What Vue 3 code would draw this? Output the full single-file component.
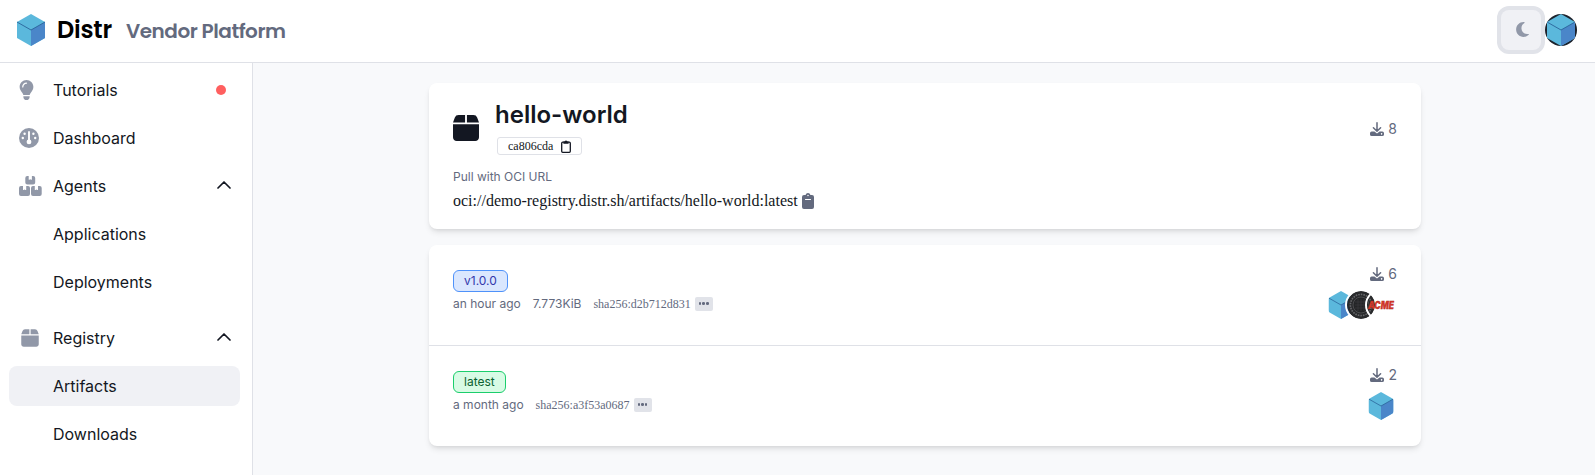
<script setup>
const nav = [
  { label: 'Tutorials', icon: 'bulb', dot: true },
  { label: 'Dashboard', icon: 'gauge' },
  { label: 'Agents', icon: 'boxes', open: true },
  { label: 'Applications' },
  { label: 'Deployments' },
  { label: 'Registry', icon: 'box', open: true, spaced: true },
  { label: 'Artifacts', active: true },
  { label: 'Downloads' }
]
const versions = [
  { tag: 'v1.0.0', tone: 'blue', age: 'an hour ago', size: '7.773KiB', sha: 'sha256:d2b712d831', pulls: 6, users: ['cube', 'tire', 'acme'] },
  { tag: 'latest', tone: 'green', age: 'a month ago', sha: 'sha256:a3f53a0687', pulls: 2, users: ['cube'] }
]
</script>

<template>
  <svg class="defs" width="0" height="0">
    <symbol id="cube" viewBox="0 0 28 32">
      <path d="M14 0 28 8V24L14 32 0 24V8Z" fill="#5bb8dc" />
      <path d="M14 16 28 8V24L14 32Z" fill="#4a86c9" />
      <path d="M0 8 14 16 28 8" fill="none" stroke="#2a6399" stroke-width=".9" />
    </symbol>
    <symbol id="box" viewBox="0 0 448 512">
      <path fill="currentColor" d="M96 32H208V160H0L32 74Q48 32 96 32zM240 32H352Q400 32 416 74L448 160H240zM0 192H448V416c0 35.3-28.7 64-64 64H64c-35.3 0-64-28.7-64-64z" />
    </symbol>
    <symbol id="download" viewBox="0 0 14 14">
      <path d="M7 .8V9M3.4 5.8 7 9.3 10.6 5.8" fill="none" stroke="currentColor" stroke-width="1.5" stroke-linecap="round" stroke-linejoin="round" />
      <path fill="currentColor" fill-rule="evenodd" d="M1.7 9.6H4.4L7 11.6 9.6 9.6H12.3Q14 9.6 14 11.2V12.4Q14 14 12.3 14H1.7Q0 14 0 12.4V11.2Q0 9.6 1.7 9.6ZM11.6 11.1a.7.7 0 1 0 .01 0Z" />
    </symbol>
  </svg>

  <header class="top">
    <svg class="logo"><use href="#cube" /></svg>
    <span class="brand">Distr</span>
    <span class="platform">Vendor Platform</span>
    <button class="theme">
      <svg width="13" height="17" viewBox="0 0 384 512"><path fill="currentColor" d="M223.5 32C100 32 0 132.3 0 256S100 480 223.5 480c60.6 0 115.5-24.2 155.8-63.4c5-4.9 6.3-12.5 3.1-18.7s-10.1-9.7-17-8.5c-9.8 1.7-19.8 2.6-30.1 2.6c-96.9 0-175.5-78.8-175.5-176c0-65.8 36-123.1 89.3-153.3c6.1-3.5 9.2-10.5 7.7-17.3s-7.3-11.9-14.3-12.5c-6.3-.5-12.6-.8-19-.8z" /></svg>
    </button>
    <span class="profile"><svg width="28" height="32"><use href="#cube" /></svg></span>
  </header>

  <div class="body">
    <nav class="side">
      <a v-for="n in nav" :key="n.label" class="item" :class="{ active: n.active, spaced: n.spaced }">
        <span class="ico">
          <svg v-if="n.icon === 'bulb'" width="15" height="20" viewBox="0 0 384 512"><path fill="currentColor" d="M272 384c9.6-31.9 29.5-59.1 49.2-86.2c5.2-7.1 10.4-14.2 15.4-21.4c19.8-28.5 31.4-63 31.4-100.3C368 78.8 289.2 0 192 0S16 78.8 16 176c0 37.3 11.6 71.9 31.4 100.3c5 7.2 10.2 14.3 15.4 21.4c19.8 27.1 39.7 54.4 49.2 86.2H272zM192 512c44.2 0 80-35.8 80-80V416H112v16c0 44.2 35.8 80 80 80zM112 176c0 8.8-7.2 16-16 16s-16-7.2-16-16c0-61.9 50.1-112 112-112c8.8 0 16 7.2 16 16s-7.2 16-16 16c-44.2 0-80 35.8-80 80z" /></svg>
          <svg v-else-if="n.icon === 'gauge'" width="20" height="20" viewBox="0 0 20 20">
            <circle cx="10" cy="10" r="10" fill="currentColor" />
            <path d="M10 3.9V13" stroke="#fff" stroke-width="1.9" stroke-linecap="round" />
            <g fill="#fff"><circle cx="10" cy="13.9" r="2.4" /><circle cx="5.6" cy="5.8" r="1.2" /><circle cx="14.4" cy="5.8" r="1.2" /><circle cx="3.8" cy="10" r="1.2" /><circle cx="16.2" cy="10" r="1.2" /></g>
          </svg>
          <svg v-else-if="n.icon === 'boxes'" width="23" height="20" viewBox="0 0 23 20">
            <g fill="currentColor">
              <path d="M8.3 0H9.7V3.2Q9.7 4 10.4 3.7L11.3 3.3 12.2 3.7Q12.9 4 12.9 3.2V0H14.1Q16.2 0 16.2 2V6.6Q16.2 8.6 14.1 8.6H8.3Q6.3 8.6 6.3 6.6V2Q6.3 0 8.3 0Z" />
              <path d="M2 10H4V13.5Q4 14.3 4.7 14L5.6 13.5 6.5 14Q7.2 14.3 7.2 13.5V10H9Q11 10 11 12V18Q11 20 9 20H2Q0 20 0 18V12Q0 10 2 10Z" />
              <path d="M14 10H15.8V13.5Q15.8 14.3 16.5 14L17.4 13.5 18.3 14Q19 14.3 19 13.5V10H20.7Q22.7 10 22.7 12V18Q22.7 20 20.7 20H14Q12 20 12 18V12Q12 10 14 10Z" />
            </g>
          </svg>
          <svg v-else-if="n.icon === 'box'" class="pkg" width="18" height="20"><use href="#box" /></svg>
        </span>
        <span class="label">{{ n.label }}</span>
        <span v-if="n.dot" class="dot"></span>
        <svg v-if="n.open" class="chev" width="14" height="8" viewBox="0 0 14 8"><path d="M1 7 7 1 13 7" fill="none" stroke="currentColor" stroke-width="1.7" stroke-linecap="round" stroke-linejoin="round" /></svg>
      </a>
    </nav>

    <main class="main">
      <section class="card summary">
        <div class="head">
          <svg class="bigbox" width="26" height="30"><use href="#box" /></svg>
          <div class="titles">
            <h1>hello-world</h1>
            <span class="hash">ca806cda
              <svg width="10" height="13" viewBox="0 0 10 13"><rect x=".7" y="2.2" width="8.6" height="10.1" rx="1" fill="none" stroke="currentColor" stroke-width="1.3" /><path d="M2.4 1.4H3.6Q5-.6 6.4 1.4H7.6V3.8H2.4Z" fill="currentColor" /></svg>
            </span>
          </div>
          <span class="pulls"><svg width="14" height="14"><use href="#download" /></svg>8</span>
        </div>
        <div class="hint">Pull with OCI URL</div>
        <div class="url">oci://demo-registry.distr.sh/artifacts/hello-world:latest
          <svg width="12" height="16" viewBox="0 0 12 16"><path fill="#636a7e" fill-rule="evenodd" d="M6 0C7.2 0 8.1.8 8.4 2H10Q12 2 12 4V14Q12 16 10 16H2Q0 16 0 14V4Q0 2 2 2H3.6C3.9.8 4.8 0 6 0ZM6 1.7A.75.75 0 1 0 6 3.2.75.75 0 1 0 6 1.7ZM3.4 6Q3 6 3 6.5T3.4 7H8.6Q9 7 9 6.5T8.6 6Z" /></svg>
        </div>
      </section>

      <section class="card">
        <article v-for="v in versions" :key="v.tag" class="version">
          <div>
            <span class="tag" :class="v.tone">{{ v.tag }}</span>
            <div class="meta">
              <span>{{ v.age }}</span>
              <span v-if="v.size">{{ v.size }}</span>
              <span class="sha">{{ v.sha }}<button class="more"><i></i><i></i><i></i></button></span>
            </div>
          </div>
          <div class="right">
            <span class="pulls"><svg width="14" height="14"><use href="#download" /></svg>{{ v.pulls }}</span>
            <div class="users">
              <span v-for="u in v.users" :key="u" class="user">
                <svg v-if="u === 'cube'" width="28" height="28"><use href="#cube" /></svg>
                <svg v-else-if="u === 'tire'" width="28" height="28" viewBox="0 0 28 28">
                  <circle cx="14" cy="14" r="14" fill="#292a2c" />
                  <circle cx="14" cy="14" r="10.6" fill="none" stroke="#66676a" stroke-width="1.6" stroke-dasharray="1.6 1" />
                  <circle cx="14" cy="14" r="8" fill="#242527" stroke="#4b4c4e" />
                  <path d="M8 11H20M8 14H20M8 17H20M11 8V20M14 8V20M17 8V20" stroke="#3d3e40" stroke-width=".6" />
                </svg>
                <svg v-else width="28" height="28" viewBox="0 0 28 28"><text x="1" y="17.8" textLength="26" lengthAdjust="spacingAndGlyphs" class="acme">ACME</text></svg>
              </span>
            </div>
          </div>
        </article>
      </section>
    </main>
  </div>
</template>

<style>
html, body { margin: 0; background: #f8f9fb; overflow: hidden; }
</style>

<style scoped>
* { box-sizing: border-box; }
svg { display: block; flex: none; }
.defs { position: absolute; }
.top, .body { font-family: Inter, "Liberation Sans", sans-serif; color: #131722; }
.top { height: 63px; display: flex; align-items: center; padding: 0 18px 3px 17px; background: #fff; border-bottom: 1px solid #dfe1e7; }
.logo { width: 28px; height: 32px; }
.brand, .platform { font-family: Poppins, Inter, sans-serif; font-weight: 600; font-feature-settings: "cv11"; white-space: nowrap; }
.brand { margin-left: 12px; width: 69px; font-size: 24px; color: #000; letter-spacing: -.2px; }
.platform { font-size: 20px; color: #636a7e; padding-top: 2px; letter-spacing: -.48px; }
.theme { width: 40px; height: 40px; margin: 0 4px 0 auto; padding: 0 0 0 2px; border: 0; border-radius: 8px; display: flex; align-items: center; justify-content: center; background: #f0f1f5; color: #9198a8; box-shadow: 0 0 0 4px #e1e3e9; }
.profile { width: 32px; height: 32px; display: flex; justify-content: center; border-radius: 50%; background: #1c222c; overflow: hidden; }
.body { display: flex; height: 412px; }
.side { width: 253px; flex: none; padding: 7px 12px 0 9px; background: #fff; border-right: 1px solid #dfe1e7; }
.item { height: 40px; margin-bottom: 8px; padding: 0 9px 0 10px; border-radius: 8px; display: flex; align-items: center; font-size: 16px; }
.item.spaced { margin-top: 16px; }
.item.active { background: #f0f1f5; }
.ico { width: 34px; color: #9198a8; }
.pkg { margin-left: 2px; }
.label { flex: 1; }
.dot { width: 10px; height: 10px; margin-right: 5px; border-radius: 50%; background: #ff5f5f; }
.chev { margin-top: -3px; }
.main { flex: 1; padding: 20px 174px 0 176px; background: #f8f9fb; }
.card { background: #fff; border-radius: 8px; box-shadow: 0 4px 6px -1px rgba(0,0,0,.1), 0 2px 4px -2px rgba(0,0,0,.1); }
.summary { height: 146px; margin-bottom: 16px; padding: 15px 24px 16px; }
.head { display: flex; align-items: center; height: 60px; }
.bigbox { margin-right: 16px; }
.titles { flex: 1; margin-top: -2px; }
h1 { margin: 0; font-size: 24px; line-height: 32px; font-weight: 600; }
.hash { display: flex; width: 85px; height: 18px; margin: 6px 0 0 2px; padding-left: 10px; gap: 8px; align-items: center; border: 1px solid #dfe1e7; border-radius: 3px; font: 12px "Liberation Serif", serif; }
.pulls { display: flex; align-items: center; gap: 4px; font-size: 14px; line-height: 20px; color: #636a7e; }
.summary .pulls { margin-top: 2px; }
.hint { margin-top: 11px; font-size: 12px; line-height: 16px; color: #636a7e; }
.url { display: flex; align-items: center; gap: 4px; margin-top: 4px; font: 16px/24px "Liberation Serif", serif; }
.version { display: flex; justify-content: space-between; height: 100px; padding: 0 24px; }
.version + .version { height: 101px; border-top: 1px solid #dfe1e7; }
.tag { display: block; width: fit-content; height: 22px; margin-top: 25px; padding: 0 10px; border: 1px solid; border-radius: 6px; font-size: 12px; line-height: 20px; }
.blue { background: #dae7fe; border-color: #4f92fa; color: #3238ac; }
.green { background: #d8fbe5; border-color: #1bce6c; color: #0b6132; }
.meta { display: flex; align-items: center; gap: 12px; margin-top: 4px; height: 16px; font-size: 12px; line-height: 16px; color: #636a7e; }
.sha { display: flex; align-items: center; gap: 4px; font-family: "Liberation Serif", serif; }
.more { display: flex; align-items: center; justify-content: center; gap: 1px; width: 18px; height: 14px; padding: 0 0 1px; border: 0; border-radius: 2px; background: #e1e3e9; }
.more i { width: 2.6px; height: 2.6px; border-radius: 50%; background: #636a7e; }
.right { display: flex; flex-direction: column; align-items: flex-end; padding-top: 19px; }
.users { display: flex; margin-top: 5px; }
.user { width: 32px; height: 32px; border: 2px solid #fff; border-radius: 50%; overflow: hidden; }
.user + .user { margin-left: -12px; }
.acme { font: italic 900 10px Inter, sans-serif; fill: #d93a2c; stroke: #a9281e; stroke-width: .3; }
</style>
